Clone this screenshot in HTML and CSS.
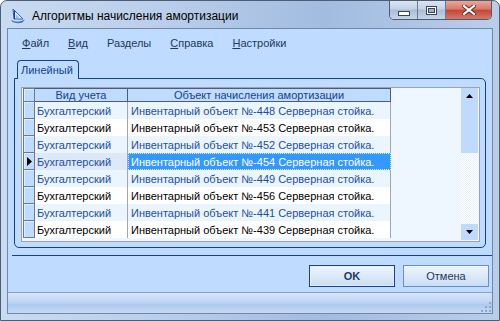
FILE: index.html
```html
<html>
  <head>
    <title>Алгоритмы начисления амортизации</title>
    <link rel="stylesheet" href="styles.css">
  </head>
  <body>
    <div class="window">
      <div class="titlebar">
        <svg class="app-icon" width="16" height="16" viewBox="0 0 16 16">
          <path d="M3 1 L13 11 L4 11 Z" fill="#eef4fc" stroke="#2a64bd" stroke-width="1"/>
          <path d="M4.5 2.5 L4.5 11" stroke="#173f8c" stroke-width="1.2"/>
          <path d="M1 12 Q8 15.5 15 11.5 L12.5 14.5 Q7 16 2.5 14 Z" fill="#3a76c6"/>
          <path d="M6 6 L10 10 L6 10 Z" fill="#9cc0ec"/>
        </svg>
        <span class="title">Алгоритмы начисления амортизации</span>
        <div class="controls">
          <span class="ctl ctl-min">
            <svg width="12" height="5" viewBox="0 0 12 5"><rect x="0.5" y="0.5" width="11" height="4" fill="#fff" stroke="#3a4658"/></svg>
          </span>
          <span class="ctl ctl-max">
            <svg width="11" height="9" viewBox="0 0 11 9"><rect x="0.5" y="0.5" width="10" height="8" fill="#fff" stroke="#3a4658"/><rect x="2.5" y="2.5" width="6" height="4" fill="#9fb0c8" stroke="#3a4658"/></svg>
          </span>
          <span class="ctl ctl-close">
            <svg width="14" height="10" viewBox="0 0 14 10">
              <path d="M2 1 L12 9 M12 1 L2 9" stroke="#5a2a22" stroke-width="4" stroke-linecap="square"/>
              <path d="M2 1 L12 9 M12 1 L2 9" stroke="#ffffff" stroke-width="2.2" stroke-linecap="square"/>
            </svg>
          </span>
        </div>
      </div>

      <div class="client">
        <nav class="menubar">
          <span class="menu-item"><u>Ф</u>айл</span>
          <span class="menu-item"><u>В</u>ид</span>
          <span class="menu-item">Разделы</span>
          <span class="menu-item"><u>С</u>правка</span>
          <span class="menu-item"><u>Н</u>астройки</span>
        </nav>

        <div class="tabstrip">
          <span class="tab">Линейный</span>
        </div>

        <div class="tabpanel">
          <div class="grid">
            <div class="rows">
              <div class="rh head"></div>
              <div class="hc">Вид учета</div>
              <div class="hc">Объект начисления амортизации</div>

              <div class="rh"></div>
              <div class="c1 alt">Бухгалтерский</div>
              <div class="c2 alt">Инвентарный объект №-448 Серверная стойка.</div>

              <div class="rh"></div>
              <div class="c1">Бухгалтерский</div>
              <div class="c2">Инвентарный объект №-453 Серверная стойка.</div>

              <div class="rh"></div>
              <div class="c1 alt">Бухгалтерский</div>
              <div class="c2 alt">Инвентарный объект №-452 Серверная стойка.</div>

              <div class="rh current">
                <svg width="5" height="9" viewBox="0 0 5 9"><path d="M0 0 L5 4.5 L0 9 Z" fill="#000"/></svg>
              </div>
              <div class="c1 cur">Бухгалтерский</div>
              <div class="c2 sel">Инвентарный объект №-454 Серверная стойка.</div>

              <div class="rh"></div>
              <div class="c1 alt">Бухгалтерский</div>
              <div class="c2 alt">Инвентарный объект №-449 Серверная стойка.</div>

              <div class="rh"></div>
              <div class="c1">Бухгалтерский</div>
              <div class="c2">Инвентарный объект №-456 Серверная стойка.</div>

              <div class="rh"></div>
              <div class="c1 alt">Бухгалтерский</div>
              <div class="c2 alt">Инвентарный объект №-441 Серверная стойка.</div>

              <div class="rh"></div>
              <div class="c1">Бухгалтерский</div>
              <div class="c2">Инвентарный объект №-439 Серверная стойка.</div>
            </div>
            <div class="blank"></div>
            <div class="vscroll">
              <div class="sb-btn">
                <svg width="7" height="4" viewBox="0 0 7 4"><path d="M0 4 L3.5 0 L7 4 Z" fill="#000"/></svg>
              </div>
              <div class="sb-thumb"></div>
              <div class="sb-track"></div>
              <div class="sb-btn">
                <svg width="7" height="4" viewBox="0 0 7 4"><path d="M0 0 L3.5 4 L7 0 Z" fill="#000"/></svg>
              </div>
            </div>
          </div>
        </div>

        <div class="separator"></div>

        <div class="actions">
          <button class="btn btn-ok">OK</button>
          <button class="btn">Отмена</button>
        </div>

        <div class="statusbar">
          <svg class="grip" width="10" height="10" viewBox="0 0 10 10">
            <rect x="8" y="0" width="2" height="2" fill="#8ea7c9"/>
            <rect x="4" y="4" width="2" height="2" fill="#8ea7c9"/>
            <rect x="8" y="4" width="2" height="2" fill="#8ea7c9"/>
            <rect x="0" y="8" width="2" height="2" fill="#8ea7c9"/>
            <rect x="4" y="8" width="2" height="2" fill="#8ea7c9"/>
            <rect x="8" y="8" width="2" height="2" fill="#8ea7c9"/>
          </svg>
        </div>
      </div>
    </div>
  </body>
</html>
```

FILE: styles.css
```css
* {
  margin: 0;
  padding: 0;
  box-sizing: border-box;
}

body {
  font-family: "Liberation Sans", Arial, sans-serif;
  font-size: 11px;
  background: #ffffff;
}

.window {
  width: 500px;
  height: 321px;
  border: 1px solid #4e5d75;
  border-radius: 7px 7px 0 0;
  padding: 0 6px 6px 6px;
  display: flex;
  flex-direction: column;
  background: linear-gradient(90deg, #c9dbf1 0%, #b8cdea 35%, #a2bbdf 65%, #b9cee9 100%);
}

/* title bar */
.titlebar {
  height: 27px;
  display: flex;
  align-items: flex-start;
}

.app-icon {
  margin: 7px 0 0 3px;
}

.title {
  font-size: 12px;
  margin: 8px 0 0 6px;
  color: #000;
}

.controls {
  margin-left: auto;
  margin-right: 1px;
  display: flex;
  height: 19px;
  border: 1px solid #4d5b72;
  border-top: none;
  border-radius: 0 0 5px 5px;
  overflow: hidden;
}

.ctl {
  display: flex;
  align-items: center;
  justify-content: center;
  height: 100%;
}

.ctl-min,
.ctl-max {
  width: 28px;
  border-right: 1px solid #6a7a94;
  background: linear-gradient(#dbe5f2 0%, #c3d2e6 45%, #a9bcd7 50%, #c6d5ea 100%);
}

.ctl-min svg {
  margin-top: 6px;
}

.ctl-close {
  width: 45px;
  background: linear-gradient(#e9a898 0%, #d9786a 45%, #c4473a 52%, #d47868 100%);
}

/* client area */
.client {
  flex: 1;
  border: 1px solid #7288aa;
  background: #bfdbff;
  display: flex;
  flex-direction: column;
}

.menubar {
  height: 28px;
  display: flex;
  align-items: center;
  gap: 19px;
  padding-left: 14px;
  color: #1e395b;
}

.menu-item u {
  text-decoration: underline;
}

.tabstrip {
  display: flex;
  margin-top: 3px;
  padding-left: 9px;
}

.tab {
  position: relative;
  height: 19px;
  margin-bottom: -1px;
  padding: 3px 5px 0 3px;
  border: 1px solid #15428b;
  border-bottom: none;
  border-radius: 4px 4px 0 0;
  background: #bfdbff;
  color: #15428b;
}

.tabpanel {
  height: 170px;
  margin: 0 6px;
  border: 1px solid #15428b;
  border-radius: 0 5px 5px 5px;
  padding: 8px 5px 0 6px;
}

/* data grid */
.grid {
  height: 155px;
  display: flex;
  border: 1px solid #9da3ab;
  padding: 0 1px 1px 1px;
  background: #eef7ff;
}

.rows {
  display: grid;
  grid-template-columns: 12px 93px 263px;
  grid-template-rows: 14px repeat(8, 17px);
  align-self: flex-start;
  background: #ffffff;
}

.rows > div {
  white-space: nowrap;
  overflow: hidden;
  display: flex;
  align-items: center;
}

.rh {
  background: #bfdbff;
  border: 1px solid #6e7a8c;
  border-top: none;
  box-shadow: inset 1px 1px #e3eefc;
  justify-content: center;
}

.rh.head {
  border-top: 1px solid #6e7a8c;
}

.hc {
  justify-content: center;
  background: #bfdbff;
  border: 1px solid #4d5c74;
  border-left: none;
  color: #15428b;
}

.c1 {
  padding-left: 2px;
  border-right: 1px solid #a3a7ad;
  color: #000;
}

.c2 {
  padding-left: 3px;
  border-right: 1px solid #a3a7ad;
  color: #000;
}

.alt {
  background: #eaf5ff;
  color: #1f4ea3;
}

.cur {
  background: #dde9f9;
  color: #1f4ea3;
}

.sel {
  background: #3399ff;
  color: #ffffff;
  border: 1px dotted #d8ecff;
  padding-left: 2px;
}

.blank {
  flex: 1;
}

.vscroll {
  width: 17px;
  display: flex;
  flex-direction: column;
}

.sb-btn {
  height: 16px;
  display: flex;
  align-items: center;
  justify-content: center;
  background: #c0dafc;
}

.sb-thumb {
  height: 49px;
  background: #c0dafc;
}

.sb-track {
  flex: 1;
  background: repeating-conic-gradient(#ffffff 0 25%, #e6eef8 0 50%) 0 0 / 2px 2px;
}

/* bottom */
.separator {
  height: 1px;
  margin: 7px 0 0 4px;
  background: #15428b;
}

.actions {
  display: flex;
  justify-content: flex-end;
  gap: 8px;
  margin-top: 9px;
  padding-right: 3px;
}

.btn {
  width: 86px;
  height: 22px;
  font-family: "Liberation Sans", Arial, sans-serif;
  font-size: 11px;
  color: #1e395b;
  border: 1px solid #6b8fc2;
  background: linear-gradient(#eef5fd 0%, #dce9fa 50%, #c9ddf8 100%);
}

.btn-ok {
  font-weight: bold;
  border-color: #15428b;
  box-shadow: inset 0 0 0 1px #e8f1fd;
}

.statusbar {
  margin-top: auto;
  height: 21px;
  border-top: 1px solid #87a2c8;
  background: linear-gradient(#d6e5f8 0%, #c3d8f4 40%, #afc9ee 60%, #c6d9f3 100%);
  display: flex;
  justify-content: flex-end;
  align-items: flex-end;
  padding: 0 1px 1px 0;
}
```
